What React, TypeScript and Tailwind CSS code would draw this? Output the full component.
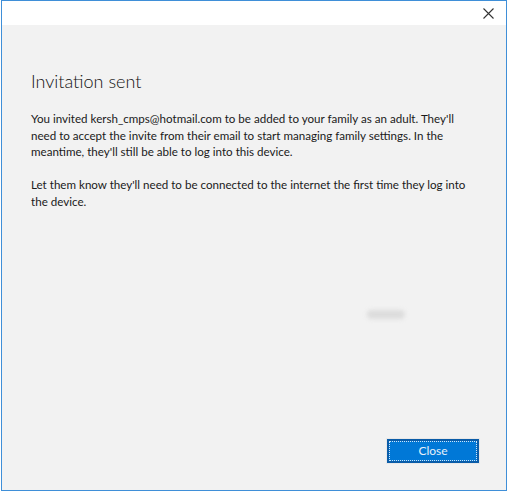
import React from 'react';

export default function App() {
  return (
    <div className="w-[508px] h-[492px] bg-white" style={{ fontFamily: 'Lato, "Open Sans", sans-serif' }}>
      <div className="ml-px w-[506px] h-[491px] border border-[#3f8fd8] flex flex-col">
        <div className="h-[24px] bg-white flex justify-end items-center pr-[12px] shrink-0">
          <svg width="11" height="11" viewBox="0 0 11 11" className="text-[#333]">
            <path d="M0.5 0.5 L10.5 10.5 M10.5 0.5 L0.5 10.5" stroke="currentColor" strokeWidth="1.1" />
          </svg>
        </div>
        <div className="relative flex-1 bg-[#f2f2f2] flex flex-col pl-[29px] pr-[26px] pt-[42px] pb-[26px]">
          <h1 className="text-[18px] font-light leading-[28px] text-[#111]">Invitation sent</h1>
          <div className="mt-[16px] w-[465px] text-[11.6px] leading-[16.5px] text-[#1a1a1a] flex flex-col gap-[16.5px]">
            <p>
              You invited kersh_cmps@hotmail.com to be added to your family as an adult. They'll<br />
              need to accept the invite from their email to start managing family settings. In the<br />
              meantime, they'll still be able to log into this device.
            </p>
            <p>
              Let them know they'll need to be connected to the internet the first time they log into<br />
              the device.
            </p>
          </div>
          <div className="absolute left-[365px] top-[285px] w-[38px] h-[9px] rounded-full bg-[#dcdcdc] blur-[2px]" />
          <div className="mt-auto flex justify-end">
            <button className="w-[94px] h-[26px] border border-[#e8e8e8] bg-[#0a5ca8] p-[2px]">
              <span className="flex h-full w-full items-center justify-center bg-[#0078d7] outline outline-1 outline-dotted outline-[#cfe4f7] -outline-offset-1 text-[12px] text-[#e6f0fa]">Close</span>
            </button>
          </div>
        </div>
      </div>
    </div>
  );
}
